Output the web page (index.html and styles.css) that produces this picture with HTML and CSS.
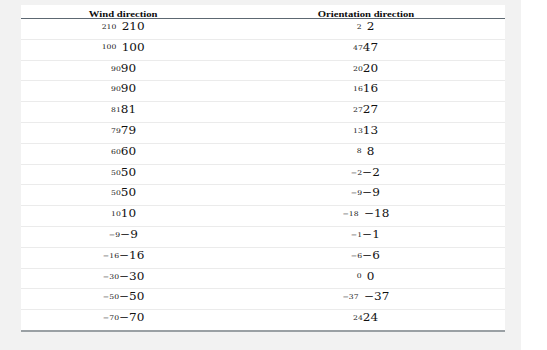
FILE: index.html
```html
<!DOCTYPE html>
<html lang="en">
<head>
<meta charset="utf-8">
<title>Wind and orientation directions</title>
<link rel="stylesheet" href="styles.css">
</head>
<body>
<div class="page">
  <div class="table">
    <div class="row head">
      <div class="cell"><span class="hd">Wind direction</span></div>
      <div class="cell"><span class="hd">Orientation direction</span></div>
    </div>
    <div class="row"><div class="cell"><span class="val"><span class="sm gap">210</span><span class="bg">210</span></span></div><div class="cell"><span class="val"><span class="sm gap">2</span><span class="bg">2</span></span></div></div>
    <div class="row"><div class="cell"><span class="val"><span class="sm gap">100</span><span class="bg">100</span></span></div><div class="cell"><span class="val"><span class="sm">47</span><span class="bg">47</span></span></div></div>
    <div class="row"><div class="cell"><span class="val"><span class="sm">90</span><span class="bg">90</span></span></div><div class="cell"><span class="val"><span class="sm">20</span><span class="bg">20</span></span></div></div>
    <div class="row"><div class="cell"><span class="val"><span class="sm">90</span><span class="bg">90</span></span></div><div class="cell"><span class="val"><span class="sm">16</span><span class="bg">16</span></span></div></div>
    <div class="row"><div class="cell"><span class="val"><span class="sm">81</span><span class="bg">81</span></span></div><div class="cell"><span class="val"><span class="sm">27</span><span class="bg">27</span></span></div></div>
    <div class="row"><div class="cell"><span class="val"><span class="sm">79</span><span class="bg">79</span></span></div><div class="cell"><span class="val"><span class="sm">13</span><span class="bg">13</span></span></div></div>
    <div class="row"><div class="cell"><span class="val"><span class="sm">60</span><span class="bg">60</span></span></div><div class="cell"><span class="val"><span class="sm gap">8</span><span class="bg">8</span></span></div></div>
    <div class="row"><div class="cell"><span class="val"><span class="sm">50</span><span class="bg">50</span></span></div><div class="cell"><span class="val"><span class="sm">−2</span><span class="bg">−2</span></span></div></div>
    <div class="row"><div class="cell"><span class="val"><span class="sm">50</span><span class="bg">50</span></span></div><div class="cell"><span class="val"><span class="sm">−9</span><span class="bg">−9</span></span></div></div>
    <div class="row"><div class="cell"><span class="val"><span class="sm">10</span><span class="bg">10</span></span></div><div class="cell"><span class="val"><span class="sm gap">−18</span><span class="bg">−18</span></span></div></div>
    <div class="row"><div class="cell"><span class="val"><span class="sm">−9</span><span class="bg">−9</span></span></div><div class="cell"><span class="val"><span class="sm">−1</span><span class="bg">−1</span></span></div></div>
    <div class="row"><div class="cell"><span class="val"><span class="sm">−16</span><span class="bg">−16</span></span></div><div class="cell"><span class="val"><span class="sm">−6</span><span class="bg">−6</span></span></div></div>
    <div class="row"><div class="cell"><span class="val"><span class="sm">−30</span><span class="bg">−30</span></span></div><div class="cell"><span class="val"><span class="sm gap">0</span><span class="bg">0</span></span></div></div>
    <div class="row"><div class="cell"><span class="val"><span class="sm">−50</span><span class="bg">−50</span></span></div><div class="cell"><span class="val"><span class="sm gap">−37</span><span class="bg">−37</span></span></div></div>
    <div class="row last"><div class="cell"><span class="val"><span class="sm">−70</span><span class="bg">−70</span></span></div><div class="cell"><span class="val"><span class="sm">24</span><span class="bg">24</span></span></div></div>
  </div>
</div>
</body>
</html>
```
FILE: styles.css
```css
html, body {
  margin: 0;
  padding: 0;
  background: #ffffff;
}

.page {
  width: 521px;
  height: 350px;
  box-sizing: border-box;
  background: #f2f2f2;
  padding: 5px 0 0 21px;
  font-family: "Liberation Serif", "Times New Roman", serif;
  color: #111111;
}

.table {
  width: 484px;
  background: #ffffff;
}

.row {
  display: grid;
  grid-template-columns: 205px 1fr;
  height: 20.8px;
  box-sizing: border-box;
  border-bottom: 1px solid #ebebeb;
}

.row.head {
  height: 14px;
  border-bottom: 1px solid #5d6872;
}

.row.last {
  height: 21.8px;
  border-bottom: 2px solid #9aa0a4;
}

.cell {
  text-align: center;
  line-height: 12px;
  white-space: nowrap;
}

.head .cell {
  line-height: 13px;
}

.hd {
  display: inline-block;
  font-size: 7.5px;
  font-weight: bold;
  color: #0d0d0d;
  transform: scaleX(1.42);
}

.val {
  display: inline-block;
  font-family: "DejaVu Serif", "Liberation Serif", serif;
  transform: scaleX(1.18);
}

.sm {
  font-size: 6.5px;
  color: #222222;
  vertical-align: 1.5px;
}

.sm.gap {
  margin-right: 4.5px;
}

.bg {
  font-size: 10.2px;
  color: #111111;
}
```
